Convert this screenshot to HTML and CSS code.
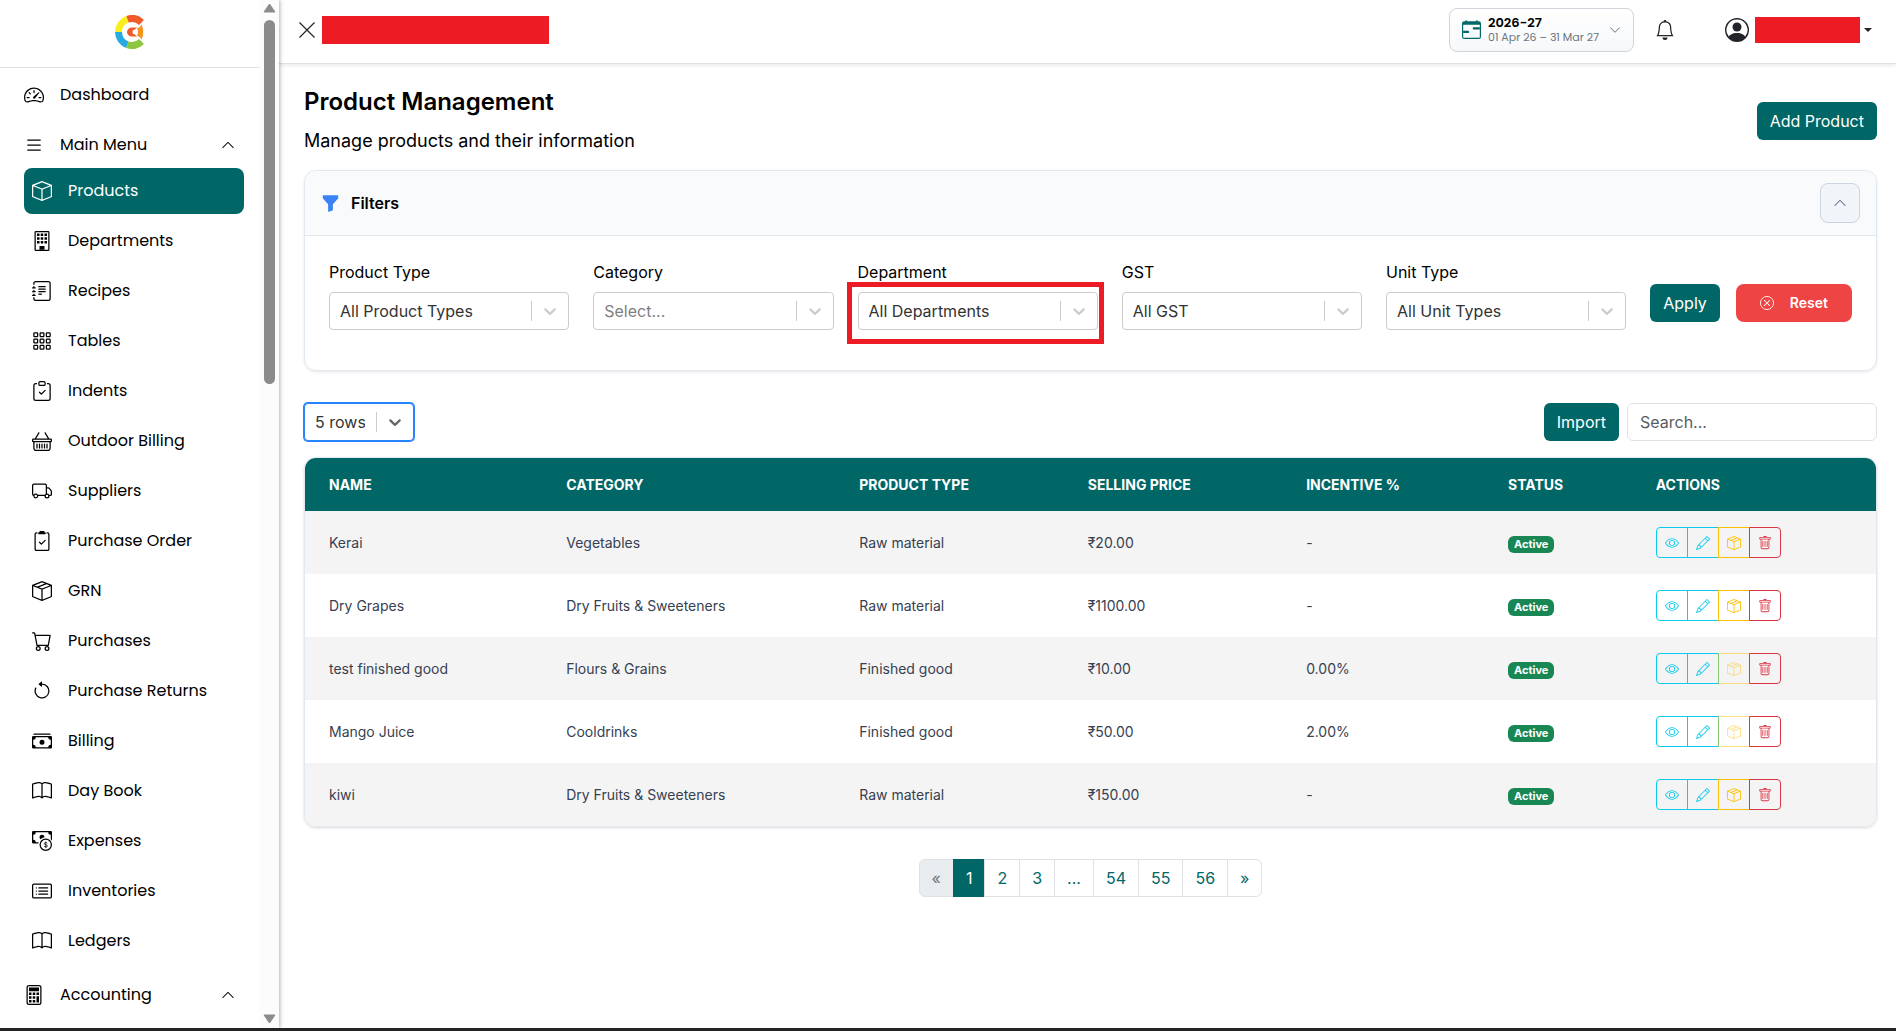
FILE: index.html
```
<!DOCTYPE html>
<html lang="en">
<head>
  <meta charset="UTF-8">
  <meta name="viewport" content="width=device-width, initial-scale=1">
  <title>Product Management</title>
  <link rel="stylesheet" href="styles.css">
</head>
<body>
  <!-- icon sprite -->
  <svg class="sprite" aria-hidden="true">
    <symbol id="i-dashboard" viewBox="0 0 16 16"><path d="M8 4a.5.5 0 0 1 .5.5V6a.5.5 0 0 1-1 0V4.5A.5.5 0 0 1 8 4M3.732 5.732a.5.5 0 0 1 .707 0l.915.914a.5.5 0 1 1-.708.708l-.914-.915a.5.5 0 0 1 0-.707M2 10a.5.5 0 0 1 .5-.5h1.586a.5.5 0 0 1 0 1H2.5A.5.5 0 0 1 2 10m9.5 0a.5.5 0 0 1 .5-.5h1.5a.5.5 0 0 1 0 1H12a.5.5 0 0 1-.5-.5m.754-4.246a.39.39 0 0 0-.527-.02L7.547 9.31a.91.91 0 1 0 1.302 1.258l3.434-4.297a.39.39 0 0 0-.029-.518z"/><path fill-rule="evenodd" d="M0 10a8 8 0 1 1 15.547 2.661c-.442 1.253-1.845 1.602-2.932 1.25C11.309 13.488 9.475 13 8 13c-1.474 0-3.31.488-4.615.911-1.087.352-2.49.003-2.932-1.25A8 8 0 0 1 0 10m8-7a7 7 0 0 0-6.603 9.329c.203.575.923.876 1.68.63C4.397 12.533 6.358 12 8 12s3.604.532 4.923.96c.757.245 1.477-.056 1.68-.631A7 7 0 0 0 8 3"/></symbol>
    <symbol id="i-list" viewBox="0 0 16 16"><path d="M2.5 12a.5.5 0 0 1 .5-.5h10a.5.5 0 0 1 0 1H3a.5.5 0 0 1-.5-.5m0-4a.5.5 0 0 1 .5-.5h10a.5.5 0 0 1 0 1H3a.5.5 0 0 1-.5-.5m0-4a.5.5 0 0 1 .5-.5h10a.5.5 0 0 1 0 1H3a.5.5 0 0 1-.5-.5"/></symbol>
    <symbol id="i-chevron-up" viewBox="0 0 16 16"><path d="M7.646 4.646a.5.5 0 0 1 .708 0l6 6a.5.5 0 0 1-.708.708L8 5.707l-5.646 5.647a.5.5 0 0 1-.708-.708z"/></symbol>
    <symbol id="i-chevron-down" viewBox="0 0 16 16"><path d="M1.646 4.646a.5.5 0 0 1 .708 0L8 10.293l5.646-5.647a.5.5 0 0 1 .708.708l-6 6a.5.5 0 0 1-.708 0l-6-6a.5.5 0 0 1 0-.708"/></symbol>
    <symbol id="i-box" viewBox="0 0 16 16"><path d="M8.186 1.113a.5.5 0 0 0-.372 0L1.846 3.5 8 5.961 14.154 3.5zM15 4.239l-6.5 2.6v7.922l6.5-2.6V4.24zM7.5 14.762V6.838L1 4.239v7.923zM7.443.184a1.5 1.5 0 0 1 1.114 0l7.129 2.852A.5.5 0 0 1 16 3.5v8.662a1 1 0 0 1-.629.928l-7.185 2.874a.5.5 0 0 1-.372 0L.63 13.09a1 1 0 0 1-.63-.928V3.5a.5.5 0 0 1 .314-.464z"/></symbol>
    <symbol id="i-box-seam" viewBox="0 0 16 16"><path d="M8.186 1.113a.5.5 0 0 0-.372 0L1.846 3.5l2.404.961L10.404 2zm3.564 1.426L5.596 5 8 5.961 14.154 3.5zm3.25 1.7-6.5 2.6v7.922l6.5-2.6V4.24zM7.5 14.762V6.838L1 4.239v7.923zM7.443.184a1.5 1.5 0 0 1 1.114 0l7.129 2.852A.5.5 0 0 1 16 3.5v8.662a1 1 0 0 1-.629.928l-7.185 2.874a.5.5 0 0 1-.372 0L.63 13.09a1 1 0 0 1-.63-.928V3.5a.5.5 0 0 1 .314-.464z"/></symbol>
    <symbol id="i-building" viewBox="0 0 16 16"><path fill-rule="evenodd" d="M2 1a1 1 0 0 1 1-1h10a1 1 0 0 1 1 1v14a1 1 0 0 1-1 1H3a1 1 0 0 1-1-1zm11 0H3v14h10z"/><path d="M4 2h2v2H4zM7 2h2v2H7zM10 2h2v2h-2zM4 5h2v2H4zM7 5h2v2H7zM10 5h2v2h-2zM4 8h2v2H4zM7 8h2v2H7zM10 8h2v2h-2zM6 12h4v3H6z"/></symbol>
    <symbol id="i-journal" viewBox="0 0 16 16"><path d="M5 10.5a.5.5 0 0 1 .5-.5h2a.5.5 0 0 1 0 1h-2a.5.5 0 0 1-.5-.5m0-2a.5.5 0 0 1 .5-.5h5a.5.5 0 0 1 0 1h-5a.5.5 0 0 1-.5-.5m0-2a.5.5 0 0 1 .5-.5h5a.5.5 0 0 1 0 1h-5a.5.5 0 0 1-.5-.5m0-2a.5.5 0 0 1 .5-.5h5a.5.5 0 0 1 0 1h-5a.5.5 0 0 1-.5-.5"/><path d="M3 0h10a2 2 0 0 1 2 2v12a2 2 0 0 1-2 2H3a2 2 0 0 1-2-2v-1h1v1a1 1 0 0 0 1 1h10a1 1 0 0 0 1-1V2a1 1 0 0 0-1-1H3a1 1 0 0 0-1 1v1H1V2a2 2 0 0 1 2-2"/><path d="M1 5v-.5a.5.5 0 0 1 1 0V5h.5a.5.5 0 0 1 0 1h-2a.5.5 0 0 1 0-1zm0 3v-.5a.5.5 0 0 1 1 0V8h.5a.5.5 0 0 1 0 1h-2a.5.5 0 0 1 0-1zm0 3v-.5a.5.5 0 0 1 1 0v.5h.5a.5.5 0 0 1 0 1h-2a.5.5 0 0 1 0-1z"/></symbol>
    <symbol id="i-grid" viewBox="0 0 16 16"><g fill="none" stroke="currentColor"><rect x="1.5" y="1.5" width="3" height="3" rx=".5"/><rect x="6.5" y="1.5" width="3" height="3" rx=".5"/><rect x="11.5" y="1.5" width="3" height="3" rx=".5"/><rect x="1.5" y="6.5" width="3" height="3" rx=".5"/><rect x="6.5" y="6.5" width="3" height="3" rx=".5"/><rect x="11.5" y="6.5" width="3" height="3" rx=".5"/><rect x="1.5" y="11.5" width="3" height="3" rx=".5"/><rect x="6.5" y="11.5" width="3" height="3" rx=".5"/><rect x="11.5" y="11.5" width="3" height="3" rx=".5"/></g></symbol>
    <symbol id="i-clipboard" viewBox="0 0 16 16"><path d="M10.854 7.146a.5.5 0 0 1 0 .708l-3 3a.5.5 0 0 1-.708 0l-1.5-1.5a.5.5 0 1 1 .708-.708L7.5 9.793l2.646-2.647a.5.5 0 0 1 .708 0"/><path d="M4 1.5H3a2 2 0 0 0-2 2V14a2 2 0 0 0 2 2h10a2 2 0 0 0 2-2V3.5a2 2 0 0 0-2-2h-1v1h1a1 1 0 0 1 1 1V14a1 1 0 0 1-1 1H3a1 1 0 0 1-1-1V3.5a1 1 0 0 1 1-1h1z"/><path d="M9.5 1a.5.5 0 0 1 .5.5v1a.5.5 0 0 1-.5.5h-3a.5.5 0 0 1-.5-.5v-1a.5.5 0 0 1 .5-.5zm-3-1A1.5 1.5 0 0 0 5 1.5v1A1.5 1.5 0 0 0 6.5 4h3A1.5 1.5 0 0 0 11 2.5v-1A1.5 1.5 0 0 0 9.5 0z"/></symbol>
    <symbol id="i-clipboard2" viewBox="0 0 16 16"><path d="M9.5 0a.5.5 0 0 1 .5.5.5.5 0 0 0 .5.5.5.5 0 0 1 .5.5V2a.5.5 0 0 1-.5.5h-5A.5.5 0 0 1 5 2v-.5a.5.5 0 0 1 .5-.5.5.5 0 0 0 .5-.5.5.5 0 0 1 .5-.5z"/><path d="M3 2.5a.5.5 0 0 1 .5-.5H4a.5.5 0 0 0 0-1h-.5A1.5 1.5 0 0 0 2 2.5v12A1.5 1.5 0 0 0 3.5 16h9a1.5 1.5 0 0 0 1.5-1.5v-12A1.5 1.5 0 0 0 12.5 1H12a.5.5 0 0 0 0 1h.5a.5.5 0 0 1 .5.5v12a.5.5 0 0 1-.5.5h-9a.5.5 0 0 1-.5-.5z"/><path d="M10.854 7.854a.5.5 0 0 0-.708-.708L7.5 9.793 6.354 8.646a.5.5 0 1 0-.708.708l1.5 1.5a.5.5 0 0 0 .708 0z"/></symbol>
    <symbol id="i-basket" viewBox="0 0 16 16"><path d="M5.757 1.071a.5.5 0 0 1 .172.686L3.383 6h9.234L10.07 1.757a.5.5 0 1 1 .858-.514L13.783 6H15a1 1 0 0 1 1 1v1a1 1 0 0 1-1 1v4.5a2.5 2.5 0 0 1-2.5 2.5h-9A2.5 2.5 0 0 1 1 13.5V9a1 1 0 0 1-1-1V7a1 1 0 0 1 1-1h1.217L5.07 1.243a.5.5 0 0 1 .686-.172zM2 9v4.5A1.5 1.5 0 0 0 3.5 15h9a1.5 1.5 0 0 0 1.5-1.5V9zM1 7v1h14V7z"/><path d="M4 10.5v3M6 10.5v3M8 10.5v3M10 10.5v3M12 10.5v3" stroke="currentColor" stroke-linecap="round"/></symbol>
    <symbol id="i-truck" viewBox="0 0 16 16"><path d="M0 3.5A1.5 1.5 0 0 1 1.5 2h9A1.5 1.5 0 0 1 12 3.5V5h1.02a1.5 1.5 0 0 1 1.17.563l1.481 1.85a1.5 1.5 0 0 1 .329.938V10.5a1.5 1.5 0 0 1-1.5 1.5H14a2 2 0 1 1-4 0H5a2 2 0 1 1-3.998-.085A1.5 1.5 0 0 1 0 10.5zm1.294 7.456A2 2 0 0 1 4.732 11h5.536a2 2 0 0 1 .732-.732V3.5a.5.5 0 0 0-.5-.5h-9a.5.5 0 0 0-.5.5v7a.5.5 0 0 0 .294.456M12 10a2 2 0 0 1 1.732 1h.768a.5.5 0 0 0 .5-.5V8.35a.5.5 0 0 0-.11-.312l-1.48-1.85A.5.5 0 0 0 13.02 6H12zm-9 1a1 1 0 1 0 0 2 1 1 0 0 0 0-2m9 0a1 1 0 1 0 0 2 1 1 0 0 0 0-2"/></symbol>
    <symbol id="i-cart" viewBox="0 0 16 16"><path d="M0 1.5A.5.5 0 0 1 .5 1H2a.5.5 0 0 1 .485.379L2.89 3H14.5a.5.5 0 0 1 .491.592l-1.5 8A.5.5 0 0 1 13 12H4a.5.5 0 0 1-.491-.408L2.01 3.607 1.61 2H.5a.5.5 0 0 1-.5-.5M3.102 4l1.313 7h8.17l1.313-7zM5 12a2 2 0 1 0 0 4 2 2 0 0 0 0-4m7 0a2 2 0 1 0 0 4 2 2 0 0 0 0-4m-7 1a1 1 0 1 1 0 2 1 1 0 0 1 0-2m7 0a1 1 0 1 1 0 2 1 1 0 0 1 0-2"/></symbol>
    <symbol id="i-return" viewBox="0 0 16 16"><path d="M8 3a5 5 0 1 1-4.546 2.914.5.5 0 0 0-.908-.417A6 6 0 1 0 8 2z"/><path d="M8 4.466V.534a.25.25 0 0 0-.41-.192L5.23 2.308a.25.25 0 0 0 0 .384l2.36 1.966A.25.25 0 0 0 8 4.466"/></symbol>
    <symbol id="i-cash" viewBox="0 0 16 16"><path d="M1 3a1 1 0 0 1 1-1h12a1 1 0 0 1 1 1zm7 8a2 2 0 1 0 0-4 2 2 0 0 0 0 4"/><path d="M0 5a1 1 0 0 1 1-1h14a1 1 0 0 1 1 1v8a1 1 0 0 1-1 1H1a1 1 0 0 1-1-1zm3 0a2 2 0 0 1-2 2v4a2 2 0 0 1 2 2h10a2 2 0 0 1 2-2V7a2 2 0 0 1-2-2z"/></symbol>
    <symbol id="i-book" viewBox="0 0 16 16"><path d="M1 2.828c.885-.37 2.154-.769 3.388-.893 1.33-.134 2.458.063 3.112.752v9.746c-.935-.53-2.12-.603-3.213-.493-1.18.12-2.37.461-3.287.811zm7.5-.141c.654-.689 1.782-.886 3.112-.752 1.234.124 2.503.523 3.388.893v9.923c-.918-.35-2.107-.692-3.287-.81-1.094-.111-2.278-.039-3.213.492zM8 1.783C7.015.936 5.587.81 4.287.94c-1.514.153-3.042.672-3.994 1.105A.5.5 0 0 0 0 2.5v11a.5.5 0 0 0 .707.455c.882-.4 2.303-.881 3.68-1.02 1.409-.142 2.59.087 3.223.877a.5.5 0 0 0 .78 0c.633-.79 1.814-1.019 3.222-.877 1.378.139 2.8.62 3.681 1.02A.5.5 0 0 0 16 13.5v-11a.5.5 0 0 0-.293-.455c-.952-.433-2.48-.952-3.994-1.105C10.413.809 8.985.936 8 1.783"/></symbol>
    <symbol id="i-coin" viewBox="0 0 16 16"><circle cx="11" cy="11" r="4.5" fill="none" stroke="currentColor"/><path d="M1 0a1 1 0 0 0-1 1v8a1 1 0 0 0 1 1h4.083q.088-.517.258-1H3a2 2 0 0 0-2-2V3a2 2 0 0 0 2-2h10a2 2 0 0 0 2 2v3.528c.38.34.717.728 1 1.154V1a1 1 0 0 0-1-1z"/><path d="M9.998 5.083 10 5a2 2 0 1 0-3.132 1.65 6 6 0 0 1 3.13-1.567"/><path d="M12.2 9.9c-.3-1-2.4-.9-2.4.2 0 1.2 2.5.6 2.5 1.9 0 1.1-2.3 1.1-2.6 0M11 8.5v5" fill="none" stroke="currentColor" stroke-width=".6"/></symbol>
    <symbol id="i-card-list" viewBox="0 0 16 16"><path d="M14.5 3a.5.5 0 0 1 .5.5v9a.5.5 0 0 1-.5.5h-13a.5.5 0 0 1-.5-.5v-9a.5.5 0 0 1 .5-.5zm-13-1A1.5 1.5 0 0 0 0 3.5v9A1.5 1.5 0 0 0 1.5 14h13a1.5 1.5 0 0 0 1.5-1.5v-9A1.5 1.5 0 0 0 14.5 2z"/><path d="M5 8a.5.5 0 0 1 .5-.5h7a.5.5 0 0 1 0 1h-7A.5.5 0 0 1 5 8m0-2.5a.5.5 0 0 1 .5-.5h7a.5.5 0 0 1 0 1h-7a.5.5 0 0 1-.5-.5m0 5a.5.5 0 0 1 .5-.5h7a.5.5 0 0 1 0 1h-7a.5.5 0 0 1-.5-.5m-1-5a.5.5 0 1 1-1 0 .5.5 0 0 1 1 0M4 8a.5.5 0 1 1-1 0 .5.5 0 0 1 1 0m0 2.5a.5.5 0 1 1-1 0 .5.5 0 0 1 1 0"/></symbol>
    <symbol id="i-calculator" viewBox="0 0 16 16"><path d="M12 1a1 1 0 0 1 1 1v12a1 1 0 0 1-1 1H4a1 1 0 0 1-1-1V2a1 1 0 0 1 1-1zM4 0a2 2 0 0 0-2 2v12a2 2 0 0 0 2 2h8a2 2 0 0 0 2-2V2a2 2 0 0 0-2-2z"/><path d="M4 2h8v3H4zM4 6h2v2H4zM7 6h2v2H7zM10 6h2v2h-2zM4 9h2v2H4zM7 9h2v2H7zM10 9h2v5h-2zM4 12h2v2H4zM7 12h2v2H7z"/></symbol>
    <symbol id="i-calendar" viewBox="0 0 16 16"><path d="M9 7a1 1 0 0 1 1-1h5v2h-5a1 1 0 0 1-1-1M1 9h4a1 1 0 0 1 0 2H1z"/><path d="M3.5 0a.5.5 0 0 1 .5.5V1h8V.5a.5.5 0 0 1 1 0V1h1a2 2 0 0 1 2 2v11a2 2 0 0 1-2 2H2a2 2 0 0 1-2-2V3a2 2 0 0 1 2-2h1V.5a.5.5 0 0 1 .5-.5M1 4v10a1 1 0 0 0 1 1h12a1 1 0 0 0 1-1V4z"/></symbol>
    <symbol id="i-bell" viewBox="0 0 16 16"><path d="M8 16a2 2 0 0 0 2-2H6a2 2 0 0 0 2 2M8 1.918l-.797.161A4 4 0 0 0 4 6c0 .628-.134 2.197-.459 3.742-.16.767-.376 1.566-.663 2.258h10.244c-.287-.692-.502-1.49-.663-2.258C12.134 8.197 12 6.628 12 6a4 4 0 0 0-3.203-3.92zM14.22 12c.223.447.481.801.78 1H1c.299-.199.557-.553.78-1C2.68 10.2 3 6.88 3 6c0-2.42 1.72-4.44 4.005-4.901a1 1 0 1 1 1.99 0A5 5 0 0 1 13 6c0 .88.32 4.2 1.22 6"/></symbol>
    <symbol id="i-person" viewBox="0 0 16 16"><path d="M11 6a3 3 0 1 1-6 0 3 3 0 0 1 6 0"/><path fill-rule="evenodd" d="M0 8a8 8 0 1 1 16 0A8 8 0 0 1 0 8m8-7a7 7 0 0 0-5.468 11.37C3.242 11.226 4.805 10 8 10s4.757 1.225 5.468 2.37A7 7 0 0 0 8 1"/></symbol>
    <symbol id="i-funnel" viewBox="0 0 16 16"><path d="M1.5 1.5A.5.5 0 0 1 2 1h12a.5.5 0 0 1 .5.5v2a.5.5 0 0 1-.128.334L10 8.692V13.5a.5.5 0 0 1-.342.474l-3 1A.5.5 0 0 1 6 14.5V8.692L1.628 3.834A.5.5 0 0 1 1.5 3.5z"/></symbol>
    <symbol id="i-close" viewBox="0 0 16 16"><path d="M.5.5l15 15M15.5.5l-15 15" stroke="currentColor" stroke-width="1.2"/></symbol>
    <symbol id="i-x-circle" viewBox="0 0 16 16"><circle cx="8" cy="8" r="7.5" fill="none" stroke="currentColor"/><path d="M4.646 4.646a.5.5 0 0 1 .708 0L8 7.293l2.646-2.647a.5.5 0 0 1 .708.708L8.707 8l2.647 2.646a.5.5 0 0 1-.708.708L8 8.707l-2.646 2.647a.5.5 0 0 1-.708-.708L7.293 8 4.646 5.354a.5.5 0 0 1 0-.708"/></symbol>
    <symbol id="i-eye" viewBox="0 0 16 16"><path d="M16 8s-3-5.5-8-5.5S0 8 0 8s3 5.5 8 5.5S16 8 16 8M1.173 8a13 13 0 0 1 1.66-2.043C4.12 4.668 5.88 3.5 8 3.5s3.879 1.168 5.168 2.457A13 13 0 0 1 14.828 8q-.086.13-.195.288c-.335.48-.83 1.12-1.465 1.755C11.879 11.332 10.119 12.5 8 12.5s-3.879-1.168-5.168-2.457A13 13 0 0 1 1.172 8z"/><path d="M8 5.5a2.5 2.5 0 1 0 0 5 2.5 2.5 0 0 0 0-5M4.5 8a3.5 3.5 0 1 1 7 0 3.5 3.5 0 0 1-7 0"/></symbol>
    <symbol id="i-pencil" viewBox="0 0 16 16"><path d="M12.146.146a.5.5 0 0 1 .708 0l3 3a.5.5 0 0 1 0 .708l-10 10a.5.5 0 0 1-.168.11l-5 2a.5.5 0 0 1-.65-.65l2-5a.5.5 0 0 1 .11-.168zM11.207 2.5 13.5 4.793 14.793 3.5 12.5 1.207zm1.586 3L10.5 3.207 4 9.707V10h.5a.5.5 0 0 1 .5.5v.5h.5a.5.5 0 0 1 .5.5v.5h.293zm-9.761 5.175-.106.106-1.528 3.821 3.821-1.528.106-.106A.5.5 0 0 1 5 12.5V12h-.5a.5.5 0 0 1-.5-.5V11h-.5a.5.5 0 0 1-.468-.325"/></symbol>
    <symbol id="i-trash" viewBox="0 0 16 16"><path d="M5.5 5.5A.5.5 0 0 1 6 6v6a.5.5 0 0 1-1 0V6a.5.5 0 0 1 .5-.5m2.5 0a.5.5 0 0 1 .5.5v6a.5.5 0 0 1-1 0V6a.5.5 0 0 1 .5-.5m3 .5a.5.5 0 0 0-1 0v6a.5.5 0 0 0 1 0z"/><path d="M14.5 3a1 1 0 0 1-1 1H13v9a2 2 0 0 1-2 2H5a2 2 0 0 1-2-2V4h-.5a1 1 0 0 1-1-1V2a1 1 0 0 1 1-1H6a1 1 0 0 1 1-1h2a1 1 0 0 1 1 1h3.5a1 1 0 0 1 1 1zM4.118 4 4 4.059V13a1 1 0 0 0 1 1h6a1 1 0 0 0 1-1V4.059L11.882 4zM2.5 3h11V2h-11z"/></symbol>
    <symbol id="i-caret" viewBox="0 0 20 20"><path d="M4.516 7.548c0.436-0.446 1.043-0.481 1.576 0l3.908 3.747 3.908-3.747c0.533-0.481 1.141-0.446 1.574 0 0.436 0.445 0.408 1.197 0 1.615-0.406 0.418-4.695 4.502-4.695 4.502-0.217 0.223-0.502 0.335-0.787 0.335s-0.57-0.112-0.789-0.335c0 0-4.287-4.084-4.695-4.502s-0.436-1.17 0-1.615z"/></symbol>
  </svg>

  <div class="app">
    <aside class="sidebar">
      <div class="sidebar-body">
        <div class="logo">
          <svg width="34" height="34" viewBox="0 0 34 34" fill="none" stroke-width="7">
            <path d="M12.4 4.300A13.5 13.5 0 0 1 26.5 7.4" stroke="#f15a29"/>
            <path d="M3.5 17A13.5 13.5 0 0 1 12.4 4.3" stroke="#f9ed1e"/>
            <path d="M12.4 29.7A13.5 13.5 0 0 1 3.5 17" stroke="#27aae1"/>
            <path d="M26.5 26.6A13.5 13.5 0 0 1 12.4 29.7" stroke="#8dc63f"/>
            <path d="M26.5 9.5q3.500 7.500 0 15-1-2.500-4.500-4 2-3.500 0-7 3.500-1.500 4.500-4z" fill="#f7941e"/>
            <path d="M22 12.5h-5a5 4.500 0 0 0 0 9h5l-2-2a2.500 2.500 0 0 1 0-5z" fill="#f15a29"/>
          </svg>
        </div>
        <nav class="menu">
          <a class="menu-item" href="#"><svg class="menu-icon"><use href="#i-dashboard"/></svg>Dashboard</a>
          <a class="menu-item" href="#"><svg class="menu-icon"><use href="#i-list"/></svg>Main Menu<svg class="menu-arrow"><use href="#i-chevron-up"/></svg></a>
          <div class="submenu">
            <a class="menu-item active" href="#"><svg class="menu-icon"><use href="#i-box"/></svg>Products</a>
            <a class="menu-item" href="#"><svg class="menu-icon"><use href="#i-building"/></svg>Departments</a>
            <a class="menu-item" href="#"><svg class="menu-icon"><use href="#i-journal"/></svg>Recipes</a>
            <a class="menu-item" href="#"><svg class="menu-icon"><use href="#i-grid"/></svg>Tables</a>
            <a class="menu-item" href="#"><svg class="menu-icon"><use href="#i-clipboard"/></svg>Indents</a>
            <a class="menu-item" href="#"><svg class="menu-icon"><use href="#i-basket"/></svg>Outdoor Billing</a>
            <a class="menu-item" href="#"><svg class="menu-icon"><use href="#i-truck"/></svg>Suppliers</a>
            <a class="menu-item" href="#"><svg class="menu-icon"><use href="#i-clipboard2"/></svg>Purchase Order</a>
            <a class="menu-item" href="#"><svg class="menu-icon"><use href="#i-box-seam"/></svg>GRN</a>
            <a class="menu-item" href="#"><svg class="menu-icon"><use href="#i-cart"/></svg>Purchases</a>
            <a class="menu-item" href="#"><svg class="menu-icon"><use href="#i-return"/></svg>Purchase Returns</a>
            <a class="menu-item" href="#"><svg class="menu-icon"><use href="#i-cash"/></svg>Billing</a>
            <a class="menu-item" href="#"><svg class="menu-icon"><use href="#i-book"/></svg>Day Book</a>
            <a class="menu-item" href="#"><svg class="menu-icon"><use href="#i-coin"/></svg>Expenses</a>
            <a class="menu-item" href="#"><svg class="menu-icon"><use href="#i-card-list"/></svg>Inventories</a>
            <a class="menu-item" href="#"><svg class="menu-icon"><use href="#i-book"/></svg>Ledgers</a>
          </div>
          <a class="menu-item" href="#"><svg class="menu-icon"><use href="#i-calculator"/></svg>Accounting<svg class="menu-arrow"><use href="#i-chevron-up"/></svg></a>
        </nav>
      </div>
      <div class="scrollbar" aria-hidden="true">
        <svg width="13" height="10" viewBox="0 0 13 10"><path d="M6.5 1 12 9H1z" stroke="#8b8b8b" stroke-linejoin="round"/></svg>
        <div class="scroll-track"><div class="scroll-thumb"></div></div>
        <svg width="13" height="10" viewBox="0 0 13 10"><path d="M6.5 9 12 1H1z" stroke="#8b8b8b" stroke-linejoin="round"/></svg>
      </div>
    </aside>

    <div class="main">
      <header class="topbar">
        <button class="icon-btn" aria-label="Close menu"><svg class="close-icon"><use href="#i-close"/></svg></button>
        <div class="redacted redacted-name"></div>
        <button class="year-btn">
          <svg class="year-icon"><use href="#i-calendar"/></svg>
          <span class="year-text">
            <strong>2026-27</strong>
            <small>01 Apr 26 – 31 Mar 27</small>
          </span>
          <svg class="year-arrow"><use href="#i-chevron-down"/></svg>
        </button>
        <button class="icon-btn bell" aria-label="Notifications"><svg class="bell-icon"><use href="#i-bell"/></svg></button>
        <button class="icon-btn user" aria-label="Account">
          <svg class="user-icon"><use href="#i-person"/></svg>
          <span class="redacted redacted-user"></span>
          <span class="caret"></span>
        </button>
      </header>

      <main class="content">
        <div class="page-head">
          <div>
            <h1>Product Management</h1>
            <p>Manage products and their information</p>
          </div>
          <button class="btn">Add Product</button>
        </div>

        <section class="filters">
          <div class="filters-head">
            <svg class="funnel-icon"><use href="#i-funnel"/></svg>
            <h2>Filters</h2>
            <button class="toggle-btn" aria-label="Collapse filters"><svg><use href="#i-chevron-up"/></svg></button>
          </div>
          <div class="filters-body">
            <div class="field">
              <label for="productType">Product Type</label>
              <div class="select-box">
                <select id="productType"><option>All Product Types</option></select>
                <svg class="select-arrow"><use href="#i-caret"/></svg>
              </div>
            </div>
            <div class="field">
              <label for="category">Category</label>
              <div class="select-box">
                <select id="category" class="placeholder"><option>Select...</option></select>
                <svg class="select-arrow"><use href="#i-caret"/></svg>
              </div>
            </div>
            <div class="field">
              <label for="department">Department</label>
              <div class="select-box highlight">
                <select id="department"><option>All Departments</option></select>
                <svg class="select-arrow"><use href="#i-caret"/></svg>
              </div>
            </div>
            <div class="field">
              <label for="gst">GST</label>
              <div class="select-box">
                <select id="gst"><option>All GST</option></select>
                <svg class="select-arrow"><use href="#i-caret"/></svg>
              </div>
            </div>
            <div class="field">
              <label for="unitType">Unit Type</label>
              <div class="select-box">
                <select id="unitType"><option>All Unit Types</option></select>
                <svg class="select-arrow"><use href="#i-caret"/></svg>
              </div>
            </div>
            <div class="filter-actions">
              <button class="btn">Apply</button>
              <button class="btn btn-reset"><svg><use href="#i-x-circle"/></svg>Reset</button>
            </div>
          </div>
        </section>

        <div class="toolbar">
          <div class="select-box rows-select">
            <select aria-label="Rows per page"><option>5 rows</option></select>
            <svg class="select-arrow"><use href="#i-caret"/></svg>
          </div>
          <button class="btn">Import</button>
          <input class="search" type="text" placeholder="Search..." aria-label="Search">
        </div>

        <div class="table-card">
          <table>
            <thead>
              <tr>
                <th class="col-name">Name</th>
                <th class="col-category">Category</th>
                <th class="col-type">Product Type</th>
                <th class="col-price">Selling Price</th>
                <th class="col-incentive">Incentive %</th>
                <th class="col-status">Status</th>
                <th>Actions</th>
              </tr>
            </thead>
            <tbody>
              <tr>
                <td>Kerai</td>
                <td>Vegetables</td>
                <td>Raw material</td>
                <td>₹20.00</td>
                <td>-</td>
                <td><span class="badge">Active</span></td>
                <td>
                  <div class="actions">
                    <button class="view" aria-label="View"><svg><use href="#i-eye"/></svg></button>
                    <button class="edit" aria-label="Edit"><svg><use href="#i-pencil"/></svg></button>
                    <button class="stock" aria-label="Stock"><svg><use href="#i-box-seam"/></svg></button>
                    <button class="delete" aria-label="Delete"><svg><use href="#i-trash"/></svg></button>
                  </div>
                </td>
              </tr>
              <tr>
                <td>Dry Grapes</td>
                <td>Dry Fruits &amp; Sweeteners</td>
                <td>Raw material</td>
                <td>₹1100.00</td>
                <td>-</td>
                <td><span class="badge">Active</span></td>
                <td>
                  <div class="actions">
                    <button class="view" aria-label="View"><svg><use href="#i-eye"/></svg></button>
                    <button class="edit" aria-label="Edit"><svg><use href="#i-pencil"/></svg></button>
                    <button class="stock" aria-label="Stock"><svg><use href="#i-box-seam"/></svg></button>
                    <button class="delete" aria-label="Delete"><svg><use href="#i-trash"/></svg></button>
                  </div>
                </td>
              </tr>
              <tr>
                <td>test finished good</td>
                <td>Flours &amp; Grains</td>
                <td>Finished good</td>
                <td>₹10.00</td>
                <td>0.00%</td>
                <td><span class="badge">Active</span></td>
                <td>
                  <div class="actions">
                    <button class="view" aria-label="View"><svg><use href="#i-eye"/></svg></button>
                    <button class="edit" aria-label="Edit"><svg><use href="#i-pencil"/></svg></button>
                    <button class="stock" aria-label="Stock" disabled><svg><use href="#i-box-seam"/></svg></button>
                    <button class="delete" aria-label="Delete"><svg><use href="#i-trash"/></svg></button>
                  </div>
                </td>
              </tr>
              <tr>
                <td>Mango Juice</td>
                <td>Cooldrinks</td>
                <td>Finished good</td>
                <td>₹50.00</td>
                <td>2.00%</td>
                <td><span class="badge">Active</span></td>
                <td>
                  <div class="actions">
                    <button class="view" aria-label="View"><svg><use href="#i-eye"/></svg></button>
                    <button class="edit" aria-label="Edit"><svg><use href="#i-pencil"/></svg></button>
                    <button class="stock" aria-label="Stock" disabled><svg><use href="#i-box-seam"/></svg></button>
                    <button class="delete" aria-label="Delete"><svg><use href="#i-trash"/></svg></button>
                  </div>
                </td>
              </tr>
              <tr>
                <td>kiwi</td>
                <td>Dry Fruits &amp; Sweeteners</td>
                <td>Raw material</td>
                <td>₹150.00</td>
                <td>-</td>
                <td><span class="badge">Active</span></td>
                <td>
                  <div class="actions">
                    <button class="view" aria-label="View"><svg><use href="#i-eye"/></svg></button>
                    <button class="edit" aria-label="Edit"><svg><use href="#i-pencil"/></svg></button>
                    <button class="stock" aria-label="Stock"><svg><use href="#i-box-seam"/></svg></button>
                    <button class="delete" aria-label="Delete"><svg><use href="#i-trash"/></svg></button>
                  </div>
                </td>
              </tr>
            </tbody>
          </table>
        </div>

        <nav class="pagination" aria-label="Pages">
          <a class="disabled">«</a>
          <a class="current" href="#">1</a>
          <a href="#">2</a>
          <a href="#">3</a>
          <a href="#">...</a>
          <a href="#">54</a>
          <a href="#">55</a>
          <a href="#">56</a>
          <a href="#">»</a>
        </nav>
      </main>
    </div>
  </div>
</body>
</html>
```

FILE: styles.css
```
* {
  box-sizing: border-box;
}
body {
  margin: 0;
  height: 100vh;
  overflow: hidden;
  border-bottom: 3px solid #242424;
  background: #fff;
  color: #000;
  font-family: Inter, "Liberation Sans", sans-serif;
  font-size: 16px;
  line-height: 24px;
}
button, input, select {
  font: inherit;
  color: inherit;
}
button {
  cursor: pointer;
}
svg {
  display: block;
  flex: none;
  fill: currentColor;
}
.sprite {
  display: none;
}
.app {
  display: flex;
  height: 100%;
}

/* Sidebar */
.sidebar {
  display: flex;
  flex: none;
  width: 279px;
  z-index: 2;
  box-shadow: 1px 0 4px rgba(0, 0, 0, 0.3);
  background: #fff;
}
.sidebar-body {
  flex: 1;
  overflow: hidden;
}
.logo {
  display: flex;
  justify-content: center;
  align-items: center;
  height: 68px;
  padding: 0 4px 4px 8px;
  border-bottom: 1px solid #dee2e6;
}
.menu {
  padding: 4px 16px 4px 24px;
  font-family: Poppins, Inter, "Liberation Sans", sans-serif;
}
.menu-item {
  display: flex;
  align-items: center;
  gap: 16px;
  height: 46px;
  margin-bottom: 4px;
  color: #000;
  text-decoration: none;
}
.menu-icon {
  width: 20px;
  height: 20px;
}
.menu-arrow {
  width: 14px;
  height: 14px;
  margin-left: auto;
  margin-right: 9px;
}
.submenu {
  margin-top: -4px;
  padding-bottom: 4px;
}
.submenu .menu-item {
  padding-left: 8px;
  border-radius: 8px;
}
.submenu .active {
  background: #006666;
  color: #fff;
}
.scrollbar {
  display: flex;
  flex-direction: column;
  align-items: center;
  width: 19px;
  padding: 3px 0 4px;
  background: #fcfcfc;
  color: #8b8b8b;
}
.scroll-track {
  flex: 1;
  padding-top: 7px;
}
.scroll-thumb {
  width: 11px;
  height: 36.6%;
  border-radius: 6px;
  background: #8b8b8b;
}

/* Top bar */
.main {
  flex: 1;
  min-width: 0;
}
.topbar {
  display: flex;
  align-items: center;
  height: 64px;
  padding: 0 24px 4px 20px;
  border-bottom: 1px solid #dee2e6;
  box-shadow: 0 2px 4px rgba(0, 0, 0, 0.08);
}
.icon-btn {
  display: flex;
  align-items: center;
  padding: 0;
  border: 0;
  background: none;
  color: #212529;
}
.close-icon {
  width: 16px;
  height: 16px;
}
.redacted {
  background: #ed1c24;
}
.redacted-name {
  width: 227px;
  height: 28px;
  margin-left: 7px;
  margin-right: auto;
}
.year-btn {
  display: flex;
  align-items: center;
  gap: 7px;
  width: 185px;
  height: 44px;
  padding: 0 12px;
  border: 1px solid #ced4da;
  border-radius: 8px;
  background: linear-gradient(#fff, #f6f8fa);
  font-family: Poppins, Inter, "Liberation Sans", sans-serif;
  text-align: left;
}
.year-icon {
  width: 19px;
  height: 19px;
  color: #006666;
}
.year-text {
  flex: 1;
  white-space: nowrap;
}
.year-text strong,
.year-text small {
  display: block;
  line-height: 14px;
}
.year-text strong {
  font-size: 13px;
  font-weight: 600;
}
.year-text small {
  font-size: 11px;
  color: #6c757d;
}
.year-arrow {
  width: 12px;
  height: 12px;
  color: #6c757d;
}
.bell {
  margin: 0 50px 0 21px;
}
.bell-icon {
  width: 20px;
  height: 20px;
}
.user-icon {
  width: 24px;
  height: 24px;
}
.redacted-user {
  width: 105px;
  height: 26px;
  margin: 0 4px 0 6px;
}
.caret {
  border: 4px solid transparent;
  border-top-color: #212529;
  border-bottom: 0;
}

/* Content */
.content {
  padding: 24px 19px 0 25px;
}
.page-head {
  display: flex;
  justify-content: space-between;
  align-items: center;
  margin-bottom: 16px;
}
.page-head h1 {
  margin: 0 0 12px;
  font-size: 24px;
  line-height: 28px;
  font-weight: 600;
}
.page-head p {
  margin: 0;
  font-size: 18px;
  line-height: 26px;
}
.btn {
  height: 38px;
  padding: 0 13px;
  border: 0;
  border-radius: 6px;
  background: #006666;
  color: #fff;
}
.filters {
  border: 1px solid #e2e8f0;
  border-radius: 12px;
  box-shadow: 0 1px 3px rgba(0, 0, 0, 0.1);
}
.filters-head {
  display: flex;
  align-items: center;
  height: 65px;
  padding: 0 16px;
  border-bottom: 1px solid #e2e8f0;
  border-radius: 12px 12px 0 0;
  background: #f8fafc;
}
.funnel-icon {
  width: 19px;
  height: 19px;
  color: #3b82f6;
}
.filters-head h2 {
  margin: 0 auto 0 11px;
  font-size: 16px;
  font-weight: 600;
}
.toggle-btn {
  display: flex;
  justify-content: center;
  align-items: center;
  width: 40px;
  height: 40px;
  border: 1px solid #cbd5e1;
  border-radius: 8px;
  background: #f1f5f9;
  color: #64748b;
}
.toggle-btn svg {
  width: 14px;
  height: 14px;
}
.filters-body {
  display: flex;
  gap: 24px;
  padding: 24px;
}
.field {
  flex: 1;
  min-width: 0;
  margin-bottom: 16px;
}
.field label {
  display: block;
  margin-bottom: 8px;
}
.select-box {
  position: relative;
}
.select-box select {
  display: block;
  width: 100%;
  height: 38px;
  padding: 0 48px 0 10px;
  border: 1px solid #ccc;
  border-radius: 4px;
  outline: 0;
  appearance: none;
  background: #fff;
  color: #333;
}
.select-box .placeholder {
  color: #808080;
}
/* divider between the value and the arrow */
.select-box::before {
  content: "";
  position: absolute;
  top: 9px;
  right: 37px;
  width: 1px;
  height: 20px;
  background: #ccc;
}
.select-arrow {
  position: absolute;
  top: 9px;
  right: 9px;
  width: 20px;
  height: 20px;
  color: #ccc;
  pointer-events: none;
}
.highlight::after {
  content: "";
  position: absolute;
  inset: -10px -6px -14px -11px;
  border: 5px solid #ed1c24;
  pointer-events: none;
}
.filter-actions {
  display: flex;
  align-items: center;
  gap: 16px;
}
.btn-reset {
  display: flex;
  align-items: center;
  gap: 16px;
  padding: 0 24px;
  border-radius: 8px;
  background: #ef4444;
  font-size: 14px;
  font-weight: 600;
}
.btn-reset svg {
  width: 14px;
  height: 14px;
}
.toolbar {
  display: flex;
  gap: 8px;
  margin: 32px 0 16px;
}
.rows-select {
  width: 110px;
  margin-right: auto;
}
.rows-select select {
  border-color: #2684ff;
  box-shadow: 0 0 0 1px #2684ff;
}
.rows-select .select-arrow {
  color: #666;
}
.search {
  width: 250px;
  height: 38px;
  padding: 0 12px;
  border: 1px solid #dee2e6;
  border-radius: 6px;
}
.search::placeholder {
  color: #595c5f;
}

/* Table */
.table-card {
  overflow: hidden;
  border: 1px solid #e2e8f0;
  border-radius: 12px;
  box-shadow: 0 1px 3px rgba(0, 0, 0, 0.15);
}
table {
  width: 100%;
  border-collapse: collapse;
  table-layout: fixed;
  font-size: 14px;
  color: #374151;
}
th, td {
  padding: 0 0 0 24px;
  text-align: left;
}
th {
  height: 53px;
  background: #006666;
  color: #fff;
  font-weight: 700;
  text-transform: uppercase;
}
td {
  height: 63px;
}
tbody tr:nth-child(odd) {
  background: #f4f4f4;
}
.col-name {
  width: 15.1%;
}
.col-category {
  width: 18.65%;
}
.col-type {
  width: 14.55%;
}
.col-price {
  width: 13.9%;
}
.col-incentive {
  width: 12.85%;
}
.col-status {
  width: 9.4%;
}
.badge {
  display: inline-block;
  padding: 0 6px;
  border-radius: 6px;
  background: #198754;
  color: #fff;
  font-size: 11px;
  line-height: 17px;
  font-weight: 700;
}
.actions {
  display: flex;
}
.actions button {
  display: flex;
  justify-content: center;
  align-items: center;
  width: 32px;
  height: 31px;
  margin-right: -1px;
  padding: 0;
  border: 1px solid;
  background: none;
}
.actions svg {
  width: 14px;
  height: 14px;
}
.actions .view {
  border-radius: 4px 0 0 4px;
  color: #0dcaf0;
}
.actions .edit {
  color: #0dcaf0;
}
.actions .stock {
  color: #ffc107;
}
.actions .stock:disabled {
  opacity: 0.5;
}
.actions .delete {
  position: relative;
  border-radius: 0 4px 4px 0;
  color: #dc3545;
}

/* Pagination */
.pagination {
  display: flex;
  justify-content: center;
  margin-top: 32px;
}
.pagination a {
  margin-left: -1px;
  padding: 6px 12px;
  border: 1px solid #dee2e6;
  background: #fff;
  color: #006666;
  text-decoration: none;
}
.pagination a:first-child {
  margin-left: 0;
  border-radius: 6px 0 0 6px;
}
.pagination a:last-child {
  border-radius: 0 6px 6px 0;
}
.pagination .disabled {
  background: #e9ecef;
  color: #6c757d;
}
.pagination .current {
  border-color: #006666;
  background: #006666;
  color: #fff;
}
```
